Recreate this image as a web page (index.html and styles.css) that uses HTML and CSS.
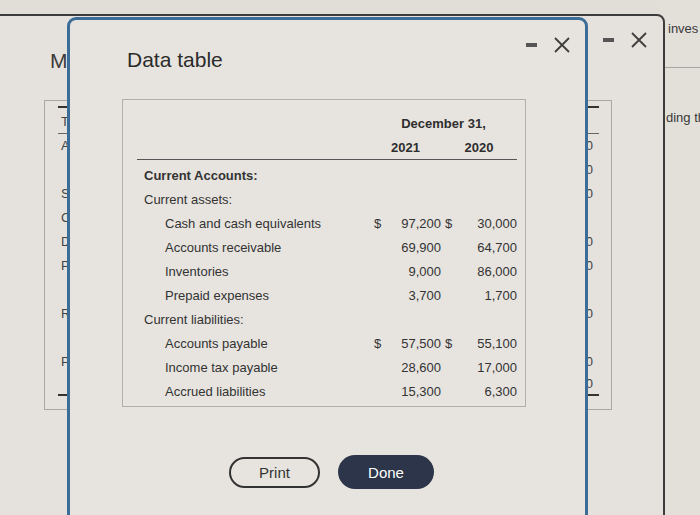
FILE: index.html
```html
<!DOCTYPE html>
<html>
<head>
<meta charset="utf-8">
<link rel="stylesheet" href="styles.css">
</head>
<body>
<div class="desk">
  <div class="page">
    <div class="page-top">inves</div>
    <div class="page-text">ding th</div>
  </div>

  <div class="win back">
    <div class="win-ctrl back-ctrl">
      <span class="minus"></span>
      <svg class="x" width="18" height="18" viewBox="0 0 18 18"><path d="M2 2 L16 16 M16 2 L2 16" stroke="#3e3e3e" stroke-width="1.8" fill="none"/></svg>
    </div>
    <div class="back-title">M</div>
    <div class="back-box">
      <div class="back-table">
        <div class="brow bhead"><span>T</span><span></span></div>
        <div class="brow"><span>A</span><span>0</span></div>
        <div class="brow"><span></span><span>0</span></div>
        <div class="brow"><span>S</span><span>0</span></div>
        <div class="brow"><span>C</span><span></span></div>
        <div class="brow"><span>D</span><span>0</span></div>
        <div class="brow"><span>P</span><span>0</span></div>
        <div class="brow"><span></span><span></span></div>
        <div class="brow"><span>R</span><span>0</span></div>
        <div class="brow"><span></span><span></span></div>
        <div class="brow"><span>P</span><span>0</span></div>
        <div class="brow blast"><span></span><span>0</span></div>
      </div>
    </div>
  </div>

  <div class="win front">
    <div class="win-ctrl front-ctrl">
      <span class="minus"></span>
      <svg class="x" width="18" height="18" viewBox="0 0 18 18"><path d="M2 2 L16 16 M16 2 L2 16" stroke="#3e3e3e" stroke-width="1.8" fill="none"/></svg>
    </div>
    <h1 class="title">Data table</h1>
    <div class="dbox">
      <div class="grid">
        <div class="hdr span4">December 31,</div>
        <div class="hdr-row">
          <div class="hdr">2021</div>
          <div class="hdr">2020</div>
        </div>

        <div class="lbl bold ind1">Current Accounts:</div>
        <div></div><div></div><div></div><div></div>

        <div class="lbl ind1">Current assets:</div>
        <div></div><div></div><div></div><div></div>

        <div class="lbl ind2">Cash and cash equivalents</div>
        <div class="cur">$</div><div class="num">97,200</div><div class="cur">$</div><div class="num">30,000</div>

        <div class="lbl ind2">Accounts receivable</div>
        <div></div><div class="num">69,900</div><div></div><div class="num">64,700</div>

        <div class="lbl ind2">Inventories</div>
        <div></div><div class="num">9,000</div><div></div><div class="num">86,000</div>

        <div class="lbl ind2">Prepaid expenses</div>
        <div></div><div class="num">3,700</div><div></div><div class="num">1,700</div>

        <div class="lbl ind1">Current liabilities:</div>
        <div></div><div></div><div></div><div></div>

        <div class="lbl ind2">Accounts payable</div>
        <div class="cur">$</div><div class="num">57,500</div><div class="cur">$</div><div class="num">55,100</div>

        <div class="lbl ind2">Income tax payable</div>
        <div></div><div class="num">28,600</div><div></div><div class="num">17,000</div>

        <div class="lbl ind2">Accrued liabilities</div>
        <div></div><div class="num">15,300</div><div></div><div class="num">6,300</div>
      </div>
    </div>
    <div class="buttons">
      <button class="btn print">Print</button>
      <button class="btn done">Done</button>
    </div>
  </div>
</div>
</body>
</html>
```

FILE: styles.css
```css
html, body {
  margin: 0;
  padding: 0;
}
body {
  width: 700px;
  height: 515px;
  overflow: hidden;
  background: #e1ddd7;
  font-family: "Liberation Sans", Arial, sans-serif;
  color: #333;
}
.desk {
  position: relative;
  width: 700px;
  height: 515px;
  overflow: hidden;
}

/* underlying page on the right */
.page {
  position: absolute;
  left: 660px;
  top: 0;
  width: 40px;
  height: 515px;
  background: #e3dfd9;
  overflow: hidden;
}
.page-top {
  height: 46px;
  padding: 21px 0 0 8px;
  font-size: 13px;
  color: #3a3a3a;
  border-bottom: 1px solid #a9a6a1;
  white-space: nowrap;
}
.page-text {
  padding: 42px 0 0 6px;
  font-size: 13px;
  color: #3a3a3a;
  white-space: nowrap;
}

/* windows */
.win {
  position: absolute;
  box-sizing: border-box;
}
.back {
  left: -30px;
  top: 14px;
  width: 695px;
  height: 540px;
  background: #e5e2dd;
  border: 2px solid #3c3c3c;
  border-radius: 8px 8px 0 0;
}
.front {
  left: 67px;
  top: 17px;
  width: 521px;
  height: 540px;
  background: #e7e4df;
  border: 3px solid #3c6c98;
  border-radius: 9px 9px 0 0;
  padding: 28px 0 0 57px;
}

.win-ctrl {
  position: absolute;
  top: 16px;
  display: flex;
  align-items: center;
  gap: 16px;
}
.front-ctrl { right: 14px; }
.back-ctrl { right: 15px; top: 15px; }
.minus {
  display: block;
  width: 11px;
  height: 4px;
  background: #555;
}

.back-title {
  position: absolute;
  left: 78px;
  top: 33px;
  font-size: 21px;
  color: #3a3a3a;
}
.back-box {
  position: absolute;
  left: 72px;
  top: 84px;
  width: 568px;
  height: 310px;
  box-sizing: border-box;
  border: 1px solid #aaa6a0;
  padding: 5px 12px 0 13px;
}
.back-table {
  border-top: 2px solid #333;
  border-bottom: 2px solid #333;
}
.brow {
  display: flex;
  justify-content: space-between;
  height: 24px;
  line-height: 24px;
  font-size: 13px;
  color: #444;
  padding: 0 6px 0 3px;
}
.bhead {
  height: 25px;
  line-height: 28px;
  border-bottom: 1px solid #666;
}
.blast { height: 20px; line-height: 20px; }

/* front content */
.title {
  margin: 0;
  font-size: 21px;
  font-weight: normal;
  color: #2b2b2b;
  line-height: 24px;
}
.dbox {
  margin: 27px 0 0 -5px;
  width: 404px;
  height: 308px;
  box-sizing: border-box;
  border: 1px solid #b3afa9;
  padding: 11px 7px 0 14px;
}
.grid {
  display: grid;
  grid-template-columns: 233px 15px 56px 18px 58px;
  grid-template-rows: 24px 28px;
  grid-auto-rows: 24px;
  font-size: 13px;
  color: #333;
  align-items: center;
}
.hdr {
  font-weight: bold;
  text-align: center;
  color: #2e2e2e;
}
.span4 {
  grid-column: 2 / 6;
}
.hdr-row {
  grid-column: 1 / 6;
  display: grid;
  grid-template-columns: 71px 76px;
  align-self: start;
  align-items: center;
  height: 24px;
  border-bottom: 1px solid #555;
  padding-left: 233px;
}
.lbl { white-space: nowrap; }
.bold { font-weight: bold; }
.ind1 { padding-left: 7px; }
.ind2 { padding-left: 28px; }
.cur { text-align: left; padding-left: 4px; }
.num { text-align: right; }

.buttons {
  display: flex;
  gap: 18px;
  margin: 48px 0 0 102px;
  align-items: center;
}
.btn {
  font-family: "Liberation Sans", Arial, sans-serif;
  font-size: 15px;
  border-radius: 17px;
  cursor: pointer;
}
.print {
  width: 91px;
  height: 31px;
  background: transparent;
  border: 2px solid #333;
  color: #333;
}
.done {
  width: 96px;
  height: 34px;
  background: #2c3549;
  border: none;
  color: #fff;
}
```
